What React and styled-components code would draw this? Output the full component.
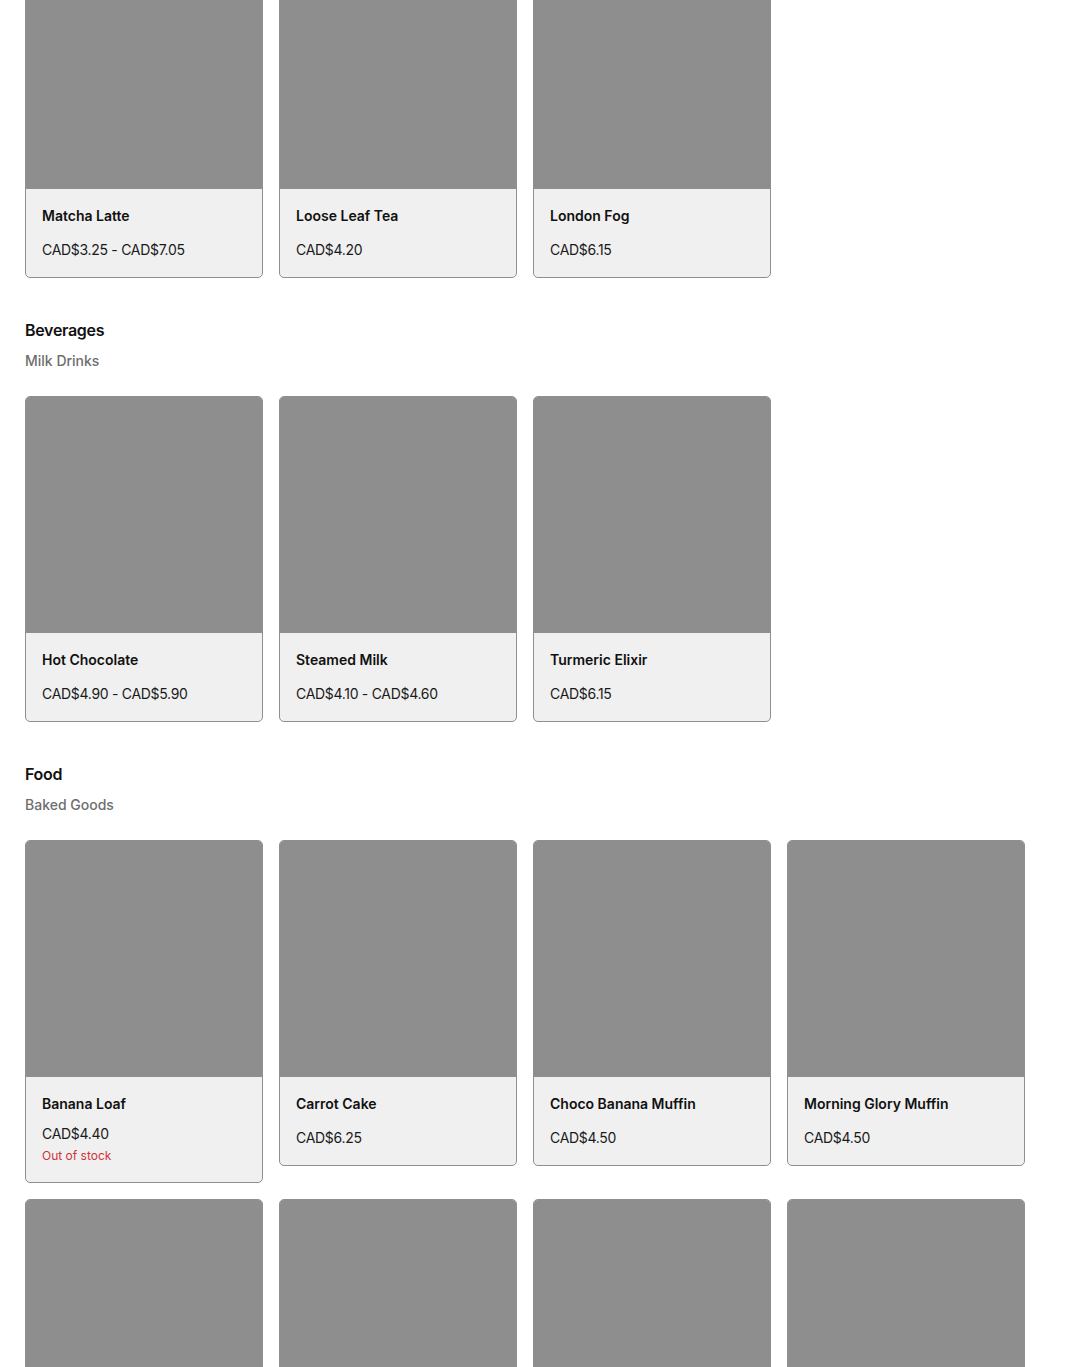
import React from 'react';
import styled, { createGlobalStyle } from 'styled-components';

const GlobalStyle = createGlobalStyle`
  body {
    margin: 0;
    background: #fff;
    font-family: Inter, "Noto Sans", Arial, sans-serif;
    color: #1a1a1a;
    overflow: hidden;
  }
`;

const sections = [
  {
    items: [
      { name: 'Matcha Latte', price: 'CAD$3.25 - CAD$7.05' },
      { name: 'Loose Leaf Tea', price: 'CAD$4.20' },
      { name: 'London Fog', price: 'CAD$6.15' },
    ],
  },
  {
    title: 'Beverages',
    subtitle: 'Milk Drinks',
    items: [
      { name: 'Hot Chocolate', price: 'CAD$4.90 - CAD$5.90' },
      { name: 'Steamed Milk', price: 'CAD$4.10 - CAD$4.60' },
      { name: 'Turmeric Elixir', price: 'CAD$6.15' },
    ],
  },
  {
    title: 'Food',
    subtitle: 'Baked Goods',
    items: [
      { name: 'Banana Loaf', price: 'CAD$4.40', soldOut: true },
      { name: 'Carrot Cake', price: 'CAD$6.25' },
      { name: 'Choco Banana Muffin', price: 'CAD$4.50' },
      { name: 'Morning Glory Muffin', price: 'CAD$4.50' },
      { name: 'Blueberry Muffin', price: 'CAD$4.50' },
      { name: 'Cinnamon Bun', price: 'CAD$5.25' },
      { name: 'Croissant', price: 'CAD$3.95' },
      { name: 'Scone', price: 'CAD$4.25' },
    ],
  },
];

function App() {
  return (
    <>
      <GlobalStyle />
      <Page>
        {sections.map((section, i) => (
          <Section key={i} $first={i === 0}>
            {section.title && (
              <SectionHeader>
                <SectionTitle>{section.title}</SectionTitle>
                <SectionSubtitle>{section.subtitle}</SectionSubtitle>
              </SectionHeader>
            )}
            <Grid>
              {section.items.map((item) => (
                <Card key={item.name}>
                  <Thumb />
                  <Info>
                    <Name>{item.name}</Name>
                    <Price $soldOut={item.soldOut}>{item.price}</Price>
                    {item.soldOut && <Stock>Out of stock</Stock>}
                  </Info>
                </Card>
              ))}
            </Grid>
          </Section>
        ))}
      </Page>
    </>
  );
}

export default App;

const Page = styled.main`
  padding: 0 25px;
  margin-top: -48px;
`;

const Section = styled.section`
  margin-top: ${(p) => (p.$first ? '0' : '40px')};
`;

const SectionHeader = styled.header`
  display: flex;
  flex-direction: column;
  gap: 9px;
  margin-bottom: 25px;
`;

const SectionTitle = styled.h2`
  margin: 0;
  font-size: 16px;
  line-height: 24px;
  font-weight: 600;
  letter-spacing: -0.3px;
  color: #111;
`;

const SectionSubtitle = styled.h3`
  margin: 0;
  font-size: 14px;
  line-height: 20px;
  font-weight: 500;
  color: #6e6e6e;
`;

const Grid = styled.div`
  display: grid;
  grid-template-columns: repeat(4, 238px);
  gap: 16px;
  align-items: start;
`;

const Card = styled.div`
  display: flex;
  flex-direction: column;
  border: 1px solid #8f8f8f;
  border-radius: 5px;
  overflow: hidden;
  background: #f0f0f0;
`;

const Thumb = styled.div`
  height: 236px;
  background: #8e8e8e;
`;

const Info = styled.div`
  display: flex;
  flex-direction: column;
  padding: 16px 16px 17px;
`;

const Name = styled.div`
  font-size: 14px;
  line-height: 22px;
  font-weight: 600;
  color: #111;
`;

const Price = styled.div`
  margin-top: ${(p) => (p.$soldOut ? '9px' : '13px')};
  font-size: 14px;
  line-height: 20px;
  letter-spacing: -0.3px;
  color: #1a1a1a;
`;

const Stock = styled.div`
  margin-top: 3px;
  font-size: 12px;
  line-height: 18px;
  color: #d0323a;
`;
